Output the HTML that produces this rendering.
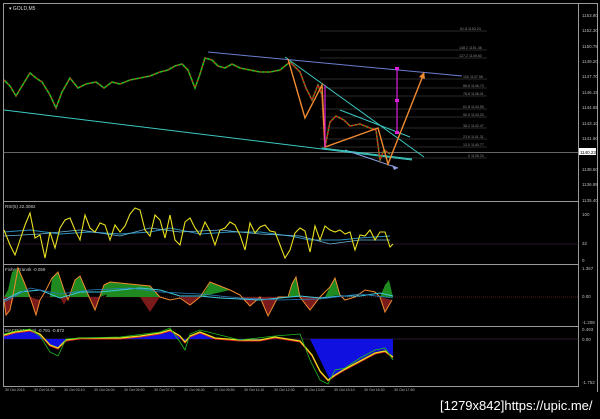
<!DOCTYPE html>
<html><head><style>
body{margin:0;background:#000;width:600px;height:414px;overflow:hidden;font-family:"Liberation Sans",sans-serif}
svg text{font-family:"Liberation Sans",sans-serif}
</style></head><body>
<svg width="600" height="414" viewBox="0 0 600 414" xmlns="http://www.w3.org/2000/svg">
<rect width="600" height="414" fill="#000"/>
<!-- frames -->
<g fill="none" stroke="#9a9a9a" stroke-width="1">
<rect x="3.5" y="3.5" width="575" height="383"/>
<line x1="3" y1="201.5" x2="579" y2="201.5"/>
<line x1="3" y1="264.5" x2="579" y2="264.5"/>
<line x1="3" y1="326.5" x2="579" y2="326.5"/>
<line x1="597.5" y1="3" x2="597.5" y2="392"/>
</g>
<line x1="3" y1="3.5" x2="597" y2="3.5" stroke="#9a9a9a"/>
<text x="9" y="10" fill="#ddd" font-size="5">▾ GOLD,M5</text>
<!-- price axis labels -->
<g fill="#bbb" font-size="4.5">
<text x="582" y="17">1153.80</text><text x="582" y="32">1152.30</text><text x="582" y="48">1150.75</text>
<text x="582" y="63">1149.20</text><text x="582" y="78">1147.70</text><text x="582" y="94">1146.15</text>
<text x="582" y="109">1144.65</text><text x="582" y="125">1143.10</text><text x="582" y="140">1141.60</text>
<text x="582" y="171">1138.50</text><text x="582" y="186">1136.95</text><text x="582" y="202">1135.40</text>
<text x="582" y="216">100</text><text x="582" y="245">32</text><text x="582" y="262">0</text>
<text x="582" y="270">1.357</text><text x="582" y="298">0.00</text><text x="582" y="324">-1.208</text>
<text x="582" y="331">0.493</text><text x="582" y="341">0.00</text><text x="582" y="384">-1.752</text>
</g>
<rect x="579" y="148" width="17" height="7" fill="#fff"/>
<text x="580" y="154" fill="#000" font-size="4.5">1140.23</text>
<!-- fib lines -->
<g stroke="#555" stroke-width="0.6">
<line x1="320" y1="31" x2="487" y2="31"/><line x1="320" y1="50" x2="487" y2="50"/>
<line x1="320" y1="58" x2="487" y2="58"/><line x1="320" y1="79" x2="487" y2="79"/>
<line x1="320" y1="88" x2="487" y2="88"/><line x1="320" y1="96" x2="487" y2="96"/>
<line x1="320" y1="109" x2="487" y2="109"/><line x1="320" y1="117" x2="487" y2="117"/>
<line x1="320" y1="128" x2="487" y2="128"/><line x1="320" y1="139" x2="487" y2="139"/>
<line x1="320" y1="147" x2="487" y2="147"/><line x1="320" y1="158" x2="487" y2="158"/>
</g>
<line x1="3" y1="152.5" x2="579" y2="152.5" stroke="#888" stroke-width="0.7"/>
<g fill="#888" font-size="3.6">
<text x="460" y="30">61.8 1153.24</text><text x="459" y="49">138.2 1151.46</text><text x="459" y="57">127.2 1149.60</text>
<text x="463" y="78">100 1147.98</text><text x="463" y="87">88.6 1146.73</text><text x="463" y="95">78.6 1146.01</text>
<text x="463" y="108">61.8 1144.55</text><text x="463" y="116">50.0 1143.33</text><text x="463" y="127">38.2 1142.47</text>
<text x="463" y="138">23.6 1141.31</text><text x="463" y="146">13.0 1140.77</text><text x="468" y="157">0 1139.33</text>
</g>
<!-- trend lines -->
<g fill="none" stroke-width="1">
<line x1="4" y1="110" x2="412" y2="160" stroke="#3cc8c0"/>
<line x1="285" y1="57" x2="424" y2="157" stroke="#3cc8c0"/>
<line x1="340" y1="110" x2="410" y2="137" stroke="#3cc8c0"/>
<line x1="208" y1="52" x2="462" y2="76" stroke="#6a7fd0"/>
<line x1="345" y1="150" x2="398" y2="168" stroke="#8aa0e0"/>
<line x1="322" y1="148" x2="412" y2="159" stroke="#3cc8c0"/>
</g>
<!-- price line candles approx -->
<polyline fill="none" stroke="#1fbf1f" stroke-width="1.6" points="4,80 10,86 16,96 22,86 30,73 36,78 42,82 50,95 56,108 62,92 70,78 78,88 86,84 96,82 104,88 112,82 120,84 130,80 140,78 150,76 160,72 168,70 175,66 182,64 188,70 195,88 200,74 205,58 212,60 218,66 225,68 232,64 240,68 250,70 260,72 270,72 280,70 290,62"/>
<polyline fill="none" stroke="#e02020" stroke-width="1" stroke-dasharray="2 3" points="4,80 10,86 16,96 22,86 30,73 36,78 42,82 50,95 56,108 62,92 70,78 78,88 86,84 96,82 104,88 112,82 120,84 130,80 140,78 150,76 160,72 168,70 175,66 182,64 188,70 195,88 200,74 205,58 212,60 218,66 225,68 232,64 240,68 250,70 260,72 270,72 280,70 290,62"/>
<polyline fill="none" stroke="#d02020" stroke-width="1.6" points="290,62 300,72 306,88 312,100 318,85 322,95 325,147 330,122 336,116 344,120 350,126 360,124 370,128 376,130 380,160 384,150 390,154"/>
<polyline fill="none" stroke="#1fbf1f" stroke-width="1" stroke-dasharray="2 2" points="290,62 300,72 306,88 312,100 318,85 322,95 325,147 330,122 336,116 344,120 350,126 360,124 370,128 376,130 380,160 384,150 390,154"/>
<!-- orange pattern -->
<polyline fill="none" stroke="#f08a30" stroke-width="1.4" points="288,59 305,118 322,85 325,147 378,128 388,164 424,73"/>
<polygon points="424,72 419,77 425,79" fill="#f08a30"/>
<g stroke="#e020e0" stroke-width="1.2"><line x1="397" y1="69" x2="397" y2="132"/><line x1="325" y1="85" x2="325" y2="147"/></g>
<g fill="#e020e0"><rect x="395" y="67" width="4" height="3"/><rect x="395" y="99" width="4" height="3"/><rect x="395" y="131" width="4" height="3"/></g>
<polygon points="398,168 392,165 394,170" fill="#8aa0e0"/>
<!-- RSI -->
<text x="5" y="208" fill="#ccc" font-size="4.5">RSI(5) 22.3082</text>
<line x1="3" y1="244" x2="579" y2="244" stroke="#502050" stroke-width="0.6"/>
<polyline fill="none" stroke="#2a8fbf" stroke-width="1" points="4,232 30,230 60,234 90,232 120,234 150,232 170,228 200,234 230,232 260,232 290,236 310,240 340,240 360,238 390,236"/>
<polyline fill="none" stroke="#6ab8e0" stroke-width="0.8" points="4,236 40,234 80,230 120,236 150,228 180,232 220,230 260,234 300,236 330,244 360,240 390,240"/>
<polyline fill="none" stroke="#e8e020" stroke-width="1.1" points="4,230 10,245 15,255 20,240 25,225 30,213 35,238 40,235 45,258 50,232 55,248 60,228 65,220 70,218 75,230 80,240 85,215 90,228 95,232 100,223 105,225 110,240 115,225 120,232 125,226 130,214 135,208 140,210 145,230 150,236 155,215 160,220 165,238 170,215 175,240 180,245 185,222 190,218 195,228 200,235 205,222 210,231 215,245 220,230 225,228 230,222 235,225 240,235 245,250 250,223 255,233 260,227 265,225 270,231 275,232 280,245 285,258 290,250 295,233 300,228 305,231 310,252 315,226 320,240 325,226 330,230 335,232 340,230 345,234 350,232 355,250 360,235 365,236 370,230 375,240 380,232 385,232 390,247 393,244"/>
<!-- Fisher -->
<text x="5" y="271" fill="#ccc" font-size="4.5">FisherTran4k -0.059</text>
<line x1="3" y1="297" x2="579" y2="297" stroke="#a03030" stroke-width="0.6" stroke-dasharray="1 1"/>
<path d="M4,297 L8,290 12,272 18,268 24,282 30,297 Z M50,297 52,278 58,272 64,290 68,297 Z M70,297 75,280 80,276 86,290 90,297 Z M100,297 104,285 110,282 118,290 Z M106,297 110,283 112,282 150,286 160,297 Z M200,297 206,290 210,282 220,286 230,290 Z M288,297 292,284 296,277 300,297 Z M325,297 330,287 335,278 340,295 Z M380,297 385,285 389,280 393,297 Z" fill="#1f8a1f"/>
<path d="M4,297 L6,315 10,310 14,297 Z M30,297 36,315 40,300 Z M60,297 64,305 68,297 Z M90,297 95,310 100,297 Z M140,297 150,312 160,297 Z M180,297 190,305 200,297 Z M240,297 250,306 260,297 Z M260,297 268,316 278,297 Z M300,297 310,310 320,297 Z M380,297 385,312 392,300 Z" fill="#7a1a1a"/>
<polyline fill="none" stroke="#f08a30" stroke-width="1" points="4,300 6,315 10,310 14,290 18,268 24,282 30,297 36,315 40,300 45,292 52,278 58,272 64,290 68,300 75,280 80,276 86,290 95,310 104,285 110,282 130,284 150,286 160,297 170,300 180,298 190,305 200,297 210,282 220,286 230,290 240,295 250,306 260,297 268,316 278,297 288,297 292,284 296,277 300,297 310,310 320,297 330,287 335,278 340,295 345,300 355,297 365,290 375,292 380,297 385,312 392,300"/>
<polyline fill="none" stroke="#3cc8e0" stroke-width="1" points="4,300 20,292 40,290 60,298 80,292 100,292 120,290 140,288 160,290 180,296 200,296 220,298 240,299 260,300 280,298 300,296 320,298 340,296 360,296 380,293 393,296"/>
<polyline fill="none" stroke="#2a7fbf" stroke-width="0.8" points="4,302 30,288 60,294 90,290 130,288 160,292 200,294 240,298 280,300 320,299 360,294 393,298"/>
<!-- MACD -->
<text x="5" y="332" fill="#ccc" font-size="4.5">MACD(12,26,9) -0.781 -0.872</text>
<line x1="3" y1="339" x2="579" y2="339" stroke="#603060" stroke-width="0.6"/>
<path d="M4,339 L4,334 15,332 30,330 40,334 50,345 58,348 66,340 80,338 100,338 120,338 140,336 160,333 170,330 180,336 185,342 190,336 200,332 215,338 240,340 260,340 270,339 Z" fill="#1010e0"/>
<path d="M270,339 L310,339 330,380 345,368 360,360 375,352 385,350 393,356 393,339 Z" fill="#1010e0"/>
<polyline fill="none" stroke="#e02020" stroke-width="1" points="4,336 15,333 30,331 40,335 50,346 58,349 66,341 80,339 100,339 120,339 140,337 160,334 170,331 180,337 185,343 190,337 200,333 215,339 240,341 260,341 275,338 300,342 312,356 320,372 328,381 335,376 345,370 360,362 375,354 385,352 393,358"/>
<polyline fill="none" stroke="#e8e020" stroke-width="1.3" points="4,335 15,332 30,330 40,334 50,345 58,348 66,340 80,338 100,338 120,338 140,336 160,333 170,330 180,336 185,342 190,336 200,332 215,338 240,340 260,340 275,337 300,341 312,355 320,371 328,380 335,375 345,369 360,361 375,353 385,351 393,357"/>
<polyline fill="none" stroke="#1fbf1f" stroke-width="0.8" points="4,334 15,331 30,329 40,336 50,352 58,356 66,339 80,338 120,337 160,332 170,328 180,342 185,350 190,334 200,330 240,340 275,336 300,334 310,360 320,380 328,384 335,370 345,368 360,358 375,350 385,348 393,360"/>
<!-- time axis -->
<g fill="#bbb" font-size="3.6">
<text x="5" y="391">30 Oct 2015</text><text x="34" y="391">30 Oct 01:50</text><text x="64" y="391">30 Oct 03:10</text>
<text x="94" y="391">30 Oct 04:00</text><text x="124" y="391">30 Oct 05:50</text><text x="154" y="391">30 Oct 07:10</text>
<text x="184" y="391">30 Oct 08:30</text><text x="214" y="391">30 Oct 09:50</text><text x="244" y="391">30 Oct 11:10</text>
<text x="274" y="391">30 Oct 12:30</text><text x="304" y="391">30 Oct 13:50</text><text x="334" y="391">30 Oct 15:10</text>
<text x="364" y="391">30 Oct 16:30</text><text x="394" y="391">30 Oct 17:50</text>
</g>
<text x="440" y="410" fill="#fff" font-size="13" font-family="Liberation Mono">[1279x842]https://upic.me/</text>
</svg>
</body></html>
